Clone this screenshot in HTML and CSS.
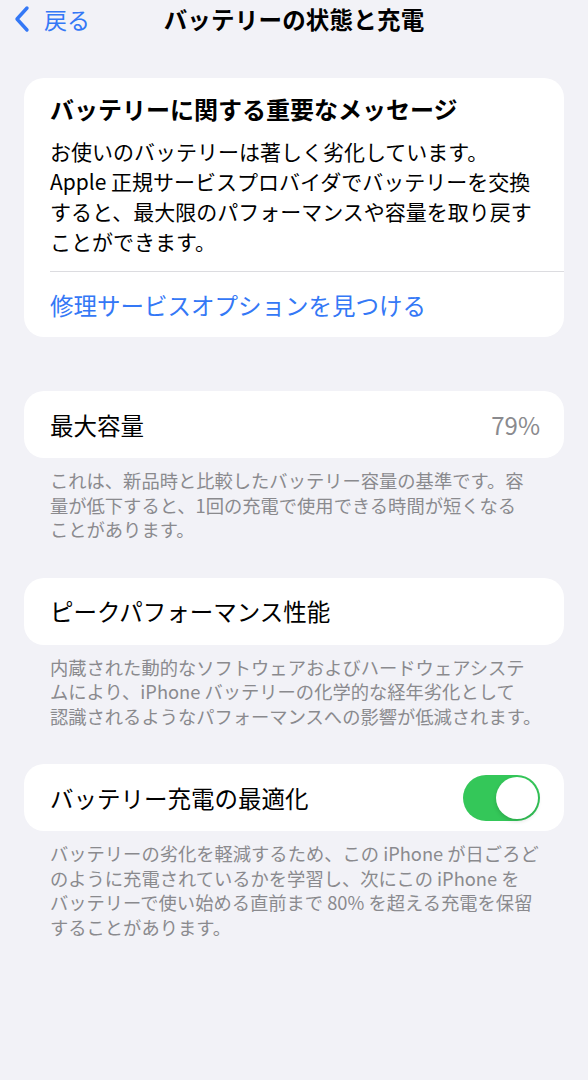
FILE: index.html
```html
<!DOCTYPE html>
<html lang="ja">
<head>
    <meta charset="UTF-8">
    <meta name="viewport" content="width=device-width, initial-scale=1.0">
    <title>バッテリーの状態と充電</title>
    <link rel="stylesheet" href="styles.css">
</head>
<body>
    <div class="nav">
        <a class="back" href="#">
            <svg class="chevron" width="18" height="28" viewBox="0 0 18 28">
                <path d="M14 3 L4 14 L14 25" fill="none" stroke="#3478f6" stroke-width="3.4" stroke-linecap="round" stroke-linejoin="round"/>
            </svg>
            <span>戻る</span>
        </a>
        <h1 class="nav-title">バッテリーの状態と充電</h1>
        <div></div>
    </div>

    <div class="card message">
        <h2 class="message-title">バッテリーに関する重要なメッセージ</h2>
        <p class="message-body">お使いのバッテリーは著しく劣化しています。<br>Apple 正規サービスプロバイダでバッテリーを交換<br>すると、最大限のパフォーマンスや容量を取り戻す<br>ことができます。</p>
        <div class="divider"></div>
        <a class="link-row" href="#">修理サービスオプションを見つける</a>
    </div>

    <div class="card row">
        <span class="label">最大容量</span>
        <span class="value">79%</span>
    </div>
    <p class="footer">これは、新品時と比較したバッテリー容量の基準です。容<br>量が低下すると、1回の充電で使用できる時間が短くなる<br>ことがあります。</p>

    <div class="card row">
        <span class="label">ピークパフォーマンス性能</span>
    </div>
    <p class="footer">内蔵された動的なソフトウェアおよびハードウェアシステ<br>ムにより、iPhone バッテリーの化学的な経年劣化として<br>認識されるようなパフォーマンスへの影響が低減されます。</p>

    <div class="card row">
        <span class="label">バッテリー充電の最適化</span>
        <div class="toggle on"><div class="knob"></div></div>
    </div>
    <p class="footer">バッテリーの劣化を軽減するため、この iPhone が日ごろど<br>のように充電されているかを学習し、次にこの iPhone を<br>バッテリーで使い始める直前まで 80% を超える充電を保留<br>することがあります。</p>
</body>
</html>
```

FILE: styles.css
```css
body {
    margin: 0;
    background-color: #f2f2f7;
    font-family: "Noto Sans CJK JP", "Noto Sans", sans-serif;
    color: #000;
}
.nav {
    height: 38px;
    display: grid;
    grid-template-columns: 1fr auto 1fr;
    align-items: center;
}
.back {
    display: flex;
    align-items: center;
    gap: 13px;
    padding-left: 13px;
    color: #3478f6;
    text-decoration: none;
    font-size: 23px;
}
.nav-title {
    margin: 0;
    font-size: 23.5px;
    font-weight: 600;
    letter-spacing: 0.2px;
}
.card {
    background-color: #fff;
    border-radius: 20px;
    margin: 0 24px;
}
.message {
    margin-top: 40px;
    padding-top: 14px;
}
.message-title {
    margin: 0 26px;
    font-size: 24px;
    line-height: 34px;
    font-weight: 700;
}
.message-body {
    margin: 10px 26px 0;
    font-size: 21px;
    line-height: 30px;
}
.divider {
    margin-top: 15px;
    margin-left: 26px;
    height: 1px;
    background-color: #dcdce0;
}
.link-row {
    display: flex;
    align-items: center;
    height: 65px;
    padding-left: 26px;
    color: #3478f6;
    font-size: 23.5px;
    text-decoration: none;
}
.row {
    display: flex;
    align-items: center;
    height: 67px;
    padding: 0 24px 0 26px;
}
.message + .row {
    margin-top: 54px;
}
.label {
    font-size: 23.5px;
}
.value {
    margin-left: auto;
    font-size: 24px;
    color: #8a8a8e;
}
.footer {
    margin: 10px 24px 36px;
    padding-left: 26px;
    font-size: 18.3px;
    line-height: 24.5px;
    color: #8a8a8e;
}
.toggle {
    margin-left: auto;
    width: 77px;
    height: 46px;
    border-radius: 23px;
    background-color: #34c759;
    display: flex;
    align-items: center;
    padding: 0 2px;
    box-sizing: border-box;
}
.toggle.on {
    justify-content: flex-end;
}
.knob {
    width: 42px;
    height: 42px;
    border-radius: 50%;
    background-color: #fff;
    box-shadow: 0 2px 4px rgba(0, 0, 0, 0.15);
}
```
